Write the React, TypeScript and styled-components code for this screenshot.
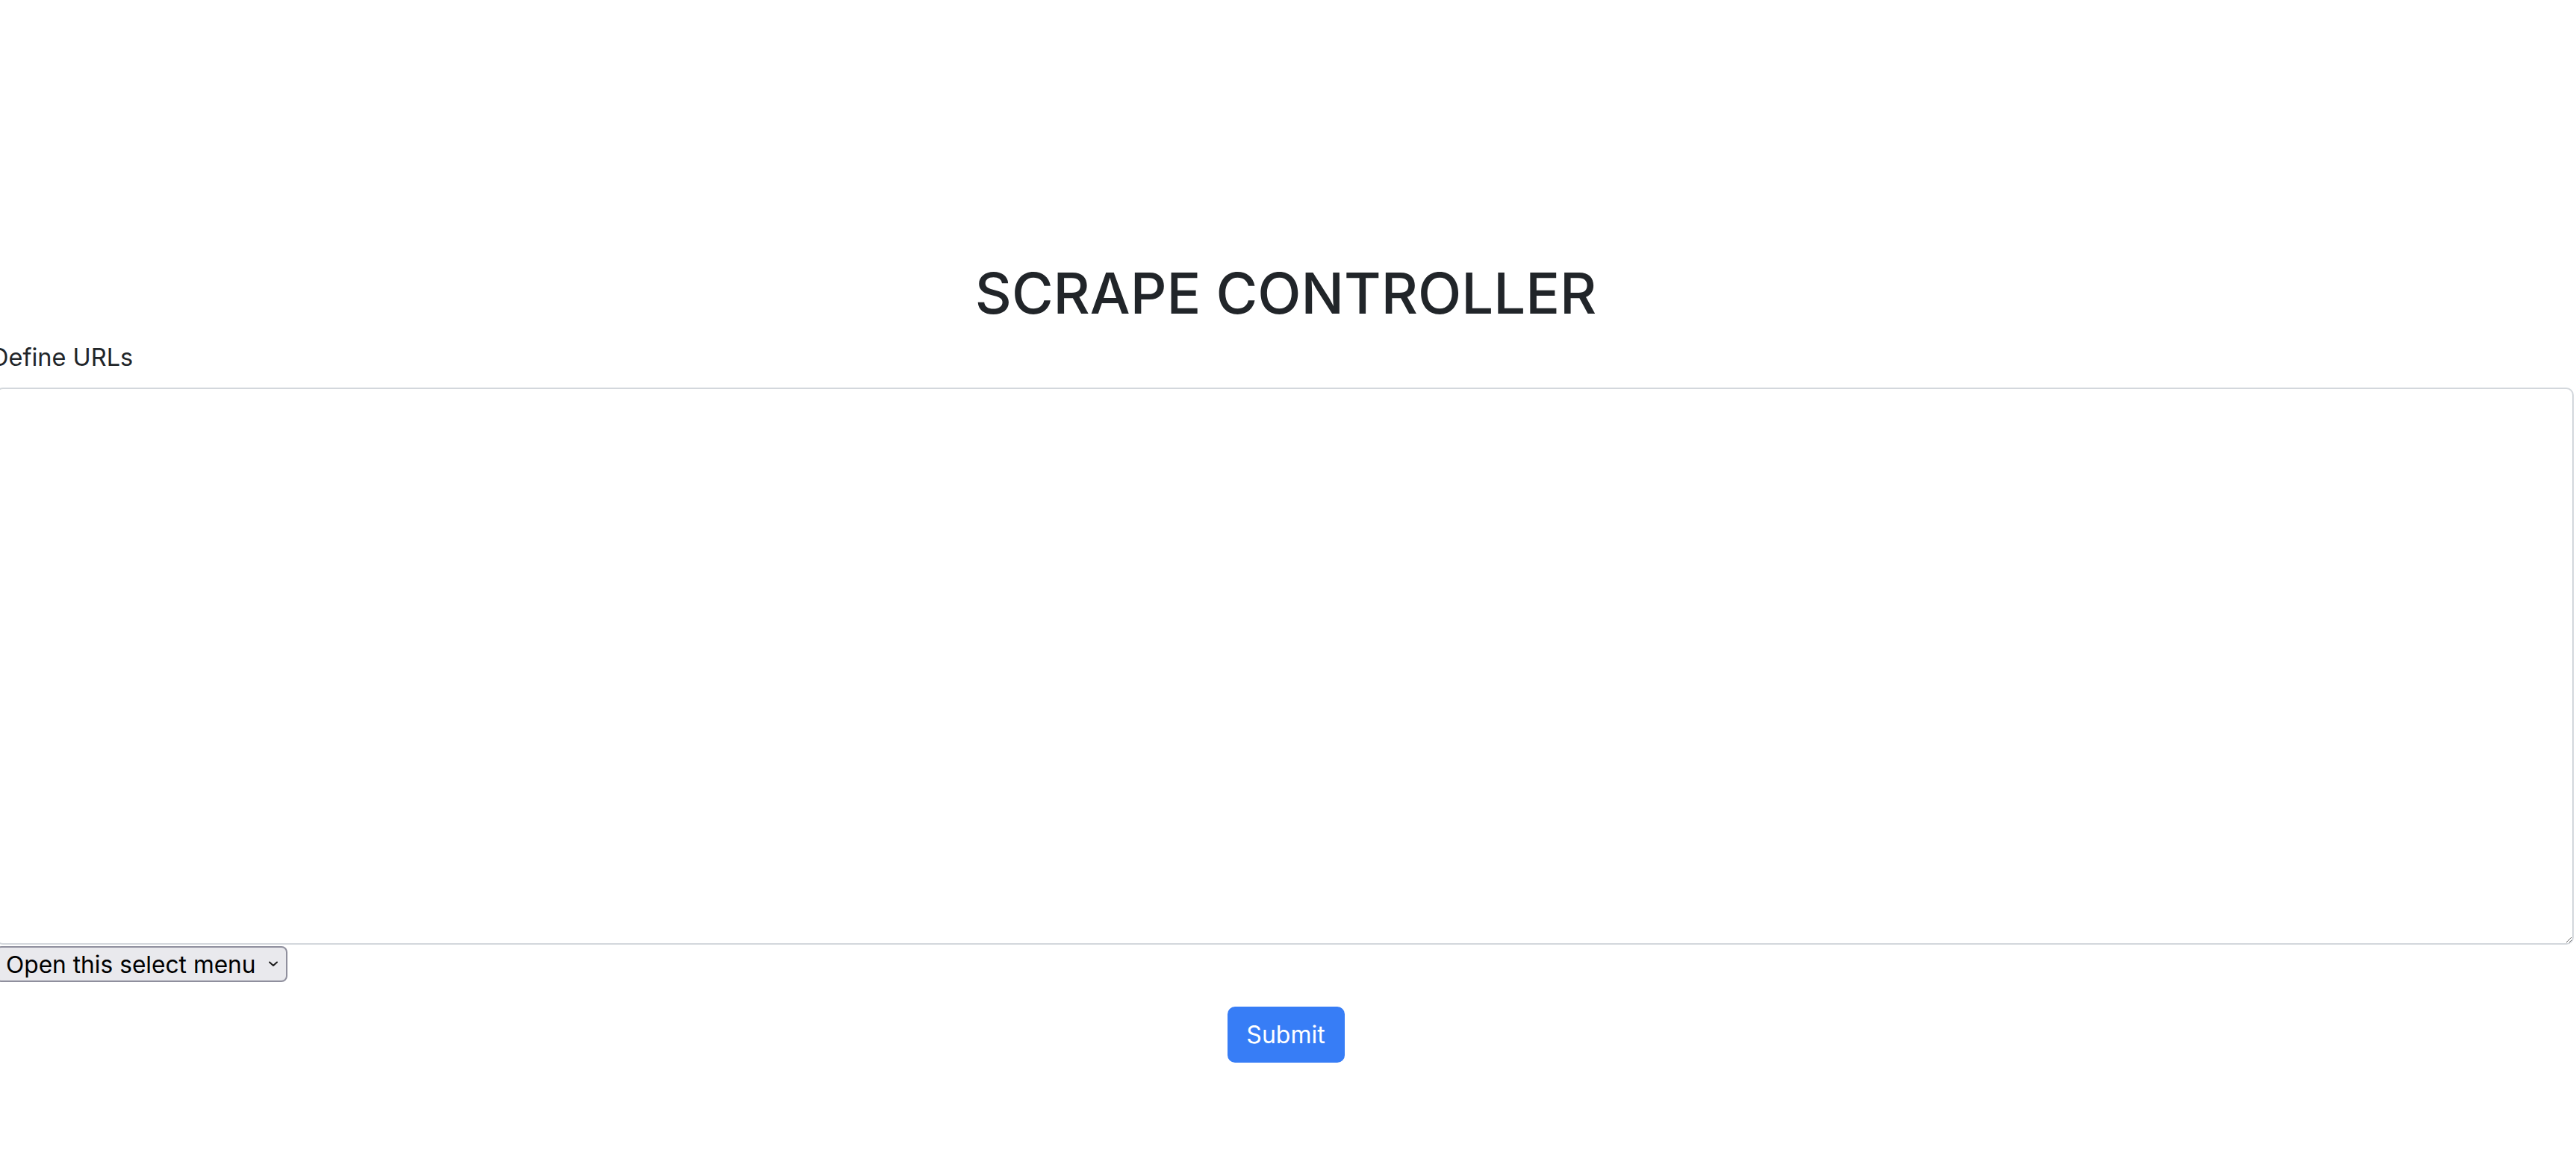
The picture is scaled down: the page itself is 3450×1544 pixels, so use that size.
import React from "react";
import styled, { createGlobalStyle } from "styled-components";

const Global = createGlobalStyle`
  html, body {
    margin: 0;
    padding: 0;
    background: #ffffff;
    overflow-x: hidden;
  }
  body {
    font-family: Inter, "Noto Sans", "Liberation Sans", sans-serif;
    color: #212529;
  }
`;

const Page = styled.div`
  margin-left: -6px;
  width: 3456px;
  padding-top: 347px;
  box-sizing: border-box;
`;

const Title = styled.h1`
  margin: 0;
  text-align: center;
  font-size: 76px;
  line-height: 91px;
  font-weight: 500;
  color: #212529;
`;

const Label = styled.label`
  display: block;
  margin: 17px 0 0 -6px;
  font-size: 32.5px;
  line-height: 48px;
  color: #212529;
`;

const UrlArea = styled.textarea`
  display: block;
  box-sizing: border-box;
  margin-top: 16px;
  width: calc(100% - 3px);
  height: 746px;
  border: 2px solid #d3d7dc;
  border-radius: 10px;
  background: #ffffff;
  font-family: inherit;
  font-size: 32px;
  outline: none;
  resize: both;
`;

const SelectWrap = styled.div`
  position: relative;
  display: inline-block;
  margin-top: 2px;
`;

const Select = styled.select`
  appearance: none;
  -webkit-appearance: none;
  box-sizing: border-box;
  height: 48px;
  width: 391px;
  padding: 0 40px 0 12px;
  font-family: Inter, "Liberation Sans", sans-serif;
  font-size: 31.7px;
  color: #000000;
  background: #e9e9ed;
  border: 2px solid #8f8f9d;
  border-radius: 8px;
  outline: none;
`;

const Chevron = styled.svg`
  position: absolute;
  right: 12px;
  top: 50%;
  transform: translateY(-50%);
  pointer-events: none;
`;

const ButtonRow = styled.div`
  display: flex;
  justify-content: center;
  margin-top: 33px;
`;

const SubmitButton = styled.button`
  box-sizing: border-box;
  height: 75px;
  width: 157px;
  padding: 0;
  border: none;
  border-radius: 10px;
  background: #377df6;
  color: #ffffff;
  font-family: Inter, "Liberation Sans", sans-serif;
  font-size: 32px;
  line-height: 48px;
  font-weight: 400;
  cursor: pointer;
`;

export default function App() {
  return (
    <>
      <Global />
      <Page>
        <Title>SCRAPE CONTROLLER</Title>
        <Label htmlFor="urls">Define URLs</Label>
        <UrlArea id="urls" />
        <SelectWrap>
          <Select defaultValue="">
            <option value="">Open this select menu</option>
            <option value="1">One</option>
            <option value="2">Two</option>
            <option value="3">Three</option>
          </Select>
          <Chevron width="14" height="10" viewBox="0 0 14 10">
            <path d="M2 2.5 L7 7 L12 2.5" fill="none" stroke="#1a1a1a" strokeWidth="2" strokeLinecap="round" strokeLinejoin="round" />
          </Chevron>
        </SelectWrap>
        <ButtonRow>
          <SubmitButton type="button">Submit</SubmitButton>
        </ButtonRow>
      </Page>
    </>
  );
}
